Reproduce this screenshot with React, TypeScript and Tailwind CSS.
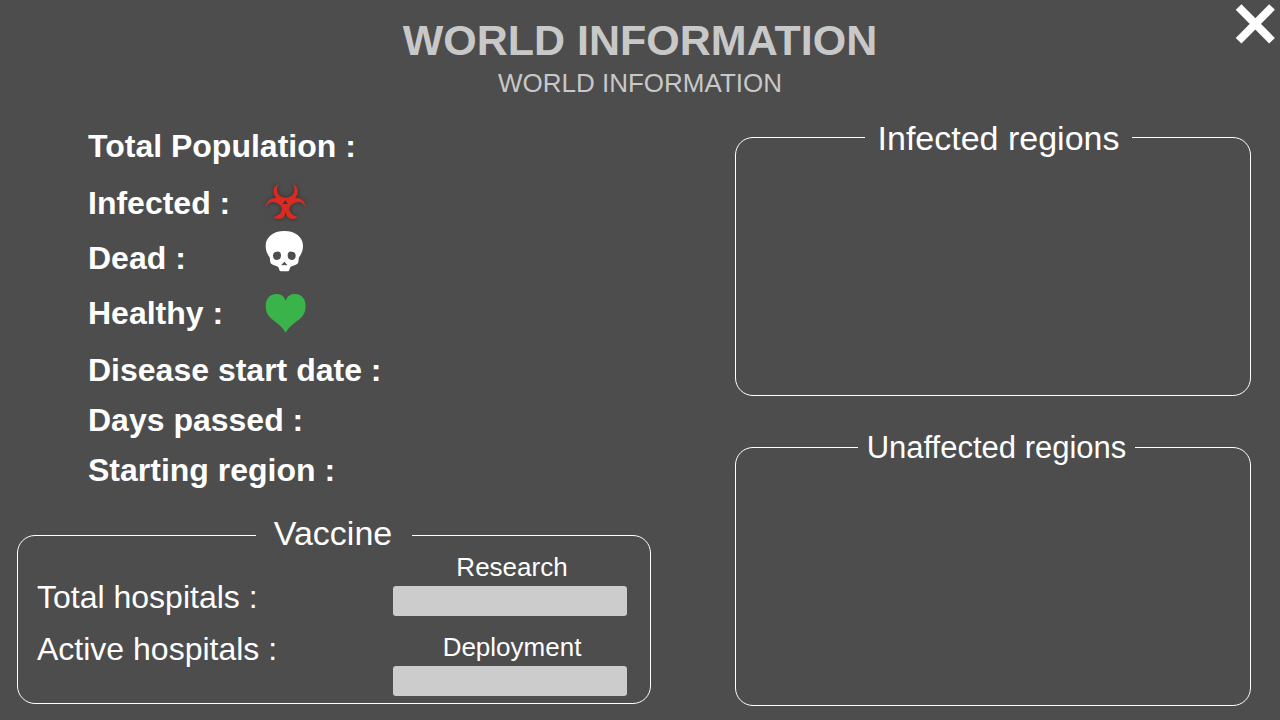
import type { ReactNode } from "react";

function BiohazardIcon() {
  return (
    <svg viewBox="27 0 132 165" className="h-[55px] w-11 drop-shadow-[0_0_2px_rgba(0,0,0,0.4)]" aria-hidden="true">
      <path
        fill="#db2a22"
        fillRule="evenodd"
        d="M69 27C59 33 55 41 56 50C57 57 59 63 63 69C46 68 34 78 32 96C39 83 49 79 59 82C73 86 81 94 81 103C79 115 70 123 55 126C64 133 76 133 83 129C88 126 90 120 92 112C94 120 96 126 101 129C108 133 120 133 129 126C114 123 105 115 103 103C103 94 111 86 125 82C135 79 145 83 152 96C150 78 138 68 121 69C125 63 127 57 128 50C129 41 125 33 115 27C120 39 119 50 114 58C109 65 101 68 92 68C83 68 75 65 70 58C65 50 64 39 69 27ZM91 75L99 87H83Z"
      />
    </svg>
  );
}

function SkullIcon() {
  return (
    <svg viewBox="27 15 132 165" className="h-[55px] w-11" aria-hidden="true">
      <path
        fill="#ffffff"
        fillRule="evenodd"
        d="M88 18C54 18 32 37 32 63C32 77 37 88 44 97C45 102 45 110 47 115C53 121 62 122 69 125C72 129 72 134 75 138C77 139 80 139 88 139C96 139 99 139 101 138C104 134 104 129 107 125C114 122 123 121 129 115C131 110 131 102 132 97C139 88 144 77 144 63C144 37 122 18 88 18ZM66 80C74 79 78 83 78 91C78 100 74 105 66 105C58 105 54 99 54 92C54 84 58 80 66 80ZM110 80C118 80 122 84 122 92C122 99 118 105 110 105C102 105 98 100 98 91C98 83 102 79 110 80ZM88 110L97 120Q92 122 88 119Q84 122 79 120Z"
      />
    </svg>
  );
}

function HeartIcon() {
  return (
    <svg viewBox="27 0 132 165" className="h-[55px] w-11" aria-hidden="true">
      <path
        fill="#39b34a"
        d="M92 48C88 33 77 26 63 27C44 27 32 42 32 64C32 80 38 92 49 101C62 112 78 119 92 143C106 119 122 112 135 101C146 92 152 80 152 64C152 42 140 27 121 27C107 26 96 33 92 48Z"
      />
    </svg>
  );
}

function Stat({ label, icon, tall = false }: { label: string; icon?: ReactNode; tall?: boolean }) {
  return (
    <div className={tall ? "flex h-[55px] items-center" : "flex h-[50px] items-center"}>
      <dt className={icon ? "w-44 whitespace-nowrap" : "whitespace-nowrap"}>{label} :</dt>
      <dd>{icon}</dd>
    </div>
  );
}

function Progress({ id, label }: { id: string; label: string }) {
  return (
    <div className="flex flex-col gap-1">
      <label htmlFor={id} className="pl-1 text-center text-[26px] leading-[30px]">
        {label}
      </label>
      <progress
        id={id}
        value={0}
        max={100}
        className="block h-[30px] w-full appearance-none overflow-hidden rounded-[3px] bg-[#cccccc] [&::-webkit-progress-bar]:bg-[#cccccc]"
      />
    </div>
  );
}

export default function App() {
  return (
    <div className="flex min-h-screen flex-col bg-[#4d4d4d] font-['Liberation_Sans',Arial,sans-serif] text-white">
      <header className="grid grid-cols-[1fr_auto_1fr]">
        <div className="col-start-2 pt-4 text-center text-[#c8c8c8]">
          <h1 className="text-[43px] leading-[48px] font-bold">WORLD INFORMATION</h1>
          <p className="pt-1 text-[26px] leading-[30px]">WORLD INFORMATION</p>
        </div>
        <button type="button" aria-label="Close" className="mt-1 mr-[5px] size-10 self-start justify-self-end">
          <svg viewBox="0 0 40 40" className="size-10" stroke="#ffffff" strokeWidth="8" aria-hidden="true">
            <path d="M3.6 3L37 36.8M37 3L3.6 36.8" />
          </svg>
        </button>
      </header>

      <main className="grid flex-1 grid-cols-[634fr_516fr] gap-x-[84px] pr-[29px] pl-[17px]">
        <div className="flex flex-col pt-[30px] pb-4">
          <dl className="pl-[71px] text-[32px] leading-9 font-bold">
            <div className="mb-[11px]">
              <dt>Total Population :</dt>
              <dd></dd>
            </div>
            <Stat label="Infected" icon={<BiohazardIcon />} tall />
            <Stat label="Dead" icon={<SkullIcon />} tall />
            <Stat label="Healthy" icon={<HeartIcon />} tall />
            <div className="pt-[5px]">
              <Stat label="Disease start date" />
              <Stat label="Days passed" />
              <Stat label="Starting region" />
            </div>
          </dl>

          <section className="mt-10 rounded-[18px] border border-white pb-[7px]">
            <h2 className="mx-auto -mt-[22px] w-fit bg-[#4d4d4d] pr-5 pl-[18px] text-[34px] leading-[38px]">
              Vaccine
            </h2>
            <div className="flex justify-between pr-[23px] pl-[19px]">
              <dl className="pt-[19px] text-[32px] leading-[52px]">
                <div className="flex">
                  <dt>Total hospitals :</dt>
                  <dd></dd>
                </div>
                <div className="flex">
                  <dt>Active hospitals :</dt>
                  <dd></dd>
                </div>
              </dl>
              <div className="flex w-[234px] flex-col gap-4">
                <Progress id="research" label="Research" />
                <Progress id="deployment" label="Deployment" />
              </div>
            </div>
          </section>
        </div>

        <div className="flex flex-col gap-[51px] pt-[39px] pb-[14px]">
          <section className="flex-1 rounded-[18px] border border-white pl-[11px]">
            <h2 className="mx-auto -mt-[19px] w-fit bg-[#4d4d4d] px-[13px] text-[34px] leading-[38px]">
              Infected regions
            </h2>
          </section>
          <section className="flex-1 rounded-[18px] border border-white pl-[7px]">
            <h2 className="mx-auto -mt-[19px] w-fit bg-[#4d4d4d] px-[9px] text-[31px] leading-[38px]">
              Unaffected regions
            </h2>
          </section>
        </div>
      </main>
    </div>
  );
}
